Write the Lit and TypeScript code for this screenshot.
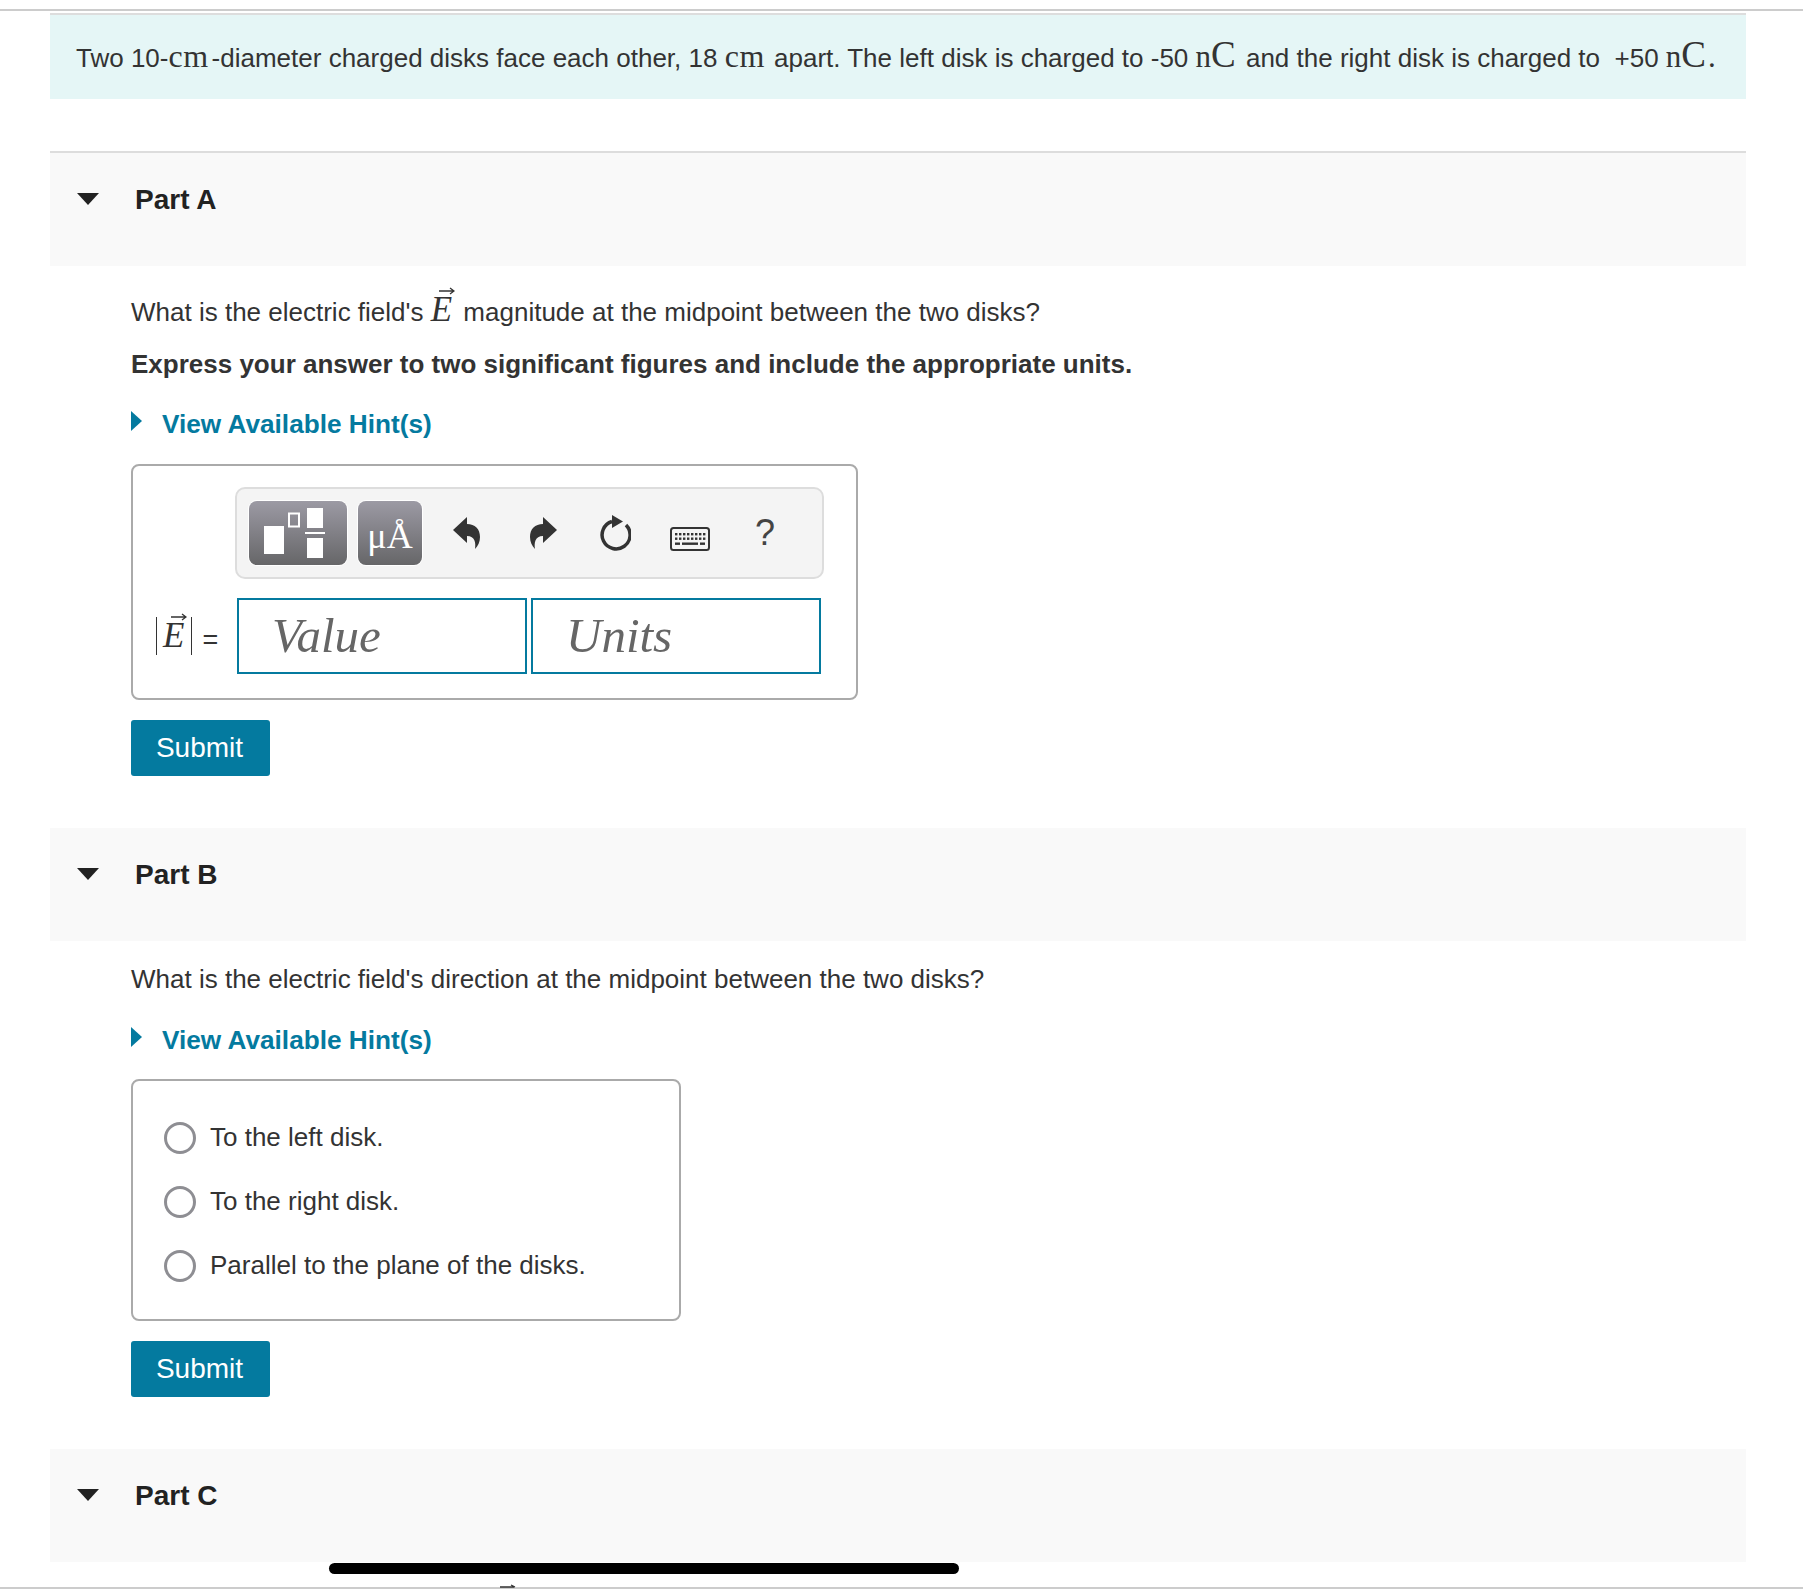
import { LitElement, html, css, svg } from "lit";
import { customElement } from "lit/decorators.js";

@customElement("app-root")
export class AppRoot extends LitElement {
  static styles = css`
    :host { display: block; position: relative; width: 1803px; height: 1589px; overflow: hidden; background: #fff;
      font-family: "Liberation Sans", Arial, sans-serif; font-size: 26px; line-height: 30px; color: #333; }
    .rule { height: 2px; background: #ccc; }
    .top { margin-top: 9px; }
    .bottom { margin-top: 25px; }
    .content { margin: 2px 57px 0 50px; }
    .banner { box-sizing: border-box; height: 86px; border-top: 2px solid #ddd; background: #e5f6f6; padding: 25px 0 0 26px; white-space: pre; }
    .m { font-family: "Liberation Serif", "Times New Roman", serif; font-size: 31px; }
    .cm { font-size: 32px; letter-spacing: 0.500px; }
    .gap { margin-left: 3px; }
    .gap2 { margin-left: 2px; }
    .big { font-size: 37px; }
    .dot { margin-left: 2px; }
    .head { display: flex; height: 113px; background: #f9f9f9; box-sizing: border-box; padding: 32px 0 0 27px; font-weight: 700; font-size: 28px; color: #222; }
    .head.first { height: 115px; border-top: 2px solid #ddd; }
    .caret { width: 22px; height: 28px; margin-right: 36px; display: flex; align-items: center; }
    .part { margin-top: 52px; }
    .body { padding-left: 81px; }
    p { margin: 0; white-space: pre; }
    .q { margin-top: 29px; height: 32px; }
    .q.plain { margin-top: 23px; height: 30px; }
    .ask { margin-top: 22px; font-weight: 700; }
    .hint { margin-top: 30px; display: flex; align-items: center; color: #047a9f; font-weight: 700; font-size: 26.200px; }
    .hint svg { margin-right: 20px; position: relative; top: -3px; }
    .hint.b { margin-top: 31px; }
    .box { border: 2px solid #aaa; border-radius: 8px; box-sizing: border-box; background: #fff; }
    .answer { width: 727px; height: 236px; margin-top: 25px; padding: 21px 0 0 22px; }
    .tools { margin-left: 80px; width: 589px; height: 92px; box-sizing: border-box; border: 2px solid #ddd; border-radius: 10px; background: #f4f4f4; padding: 12px; display: flex; align-items: center; }
    .tb { height: 64px; box-sizing: border-box; box-shadow: 0 0 0 1px #fff; border-radius: 8px; background: linear-gradient(#9c9aa4, #666668); color: #fff; display: flex; align-items: center; justify-content: center; }
    .tb.tpl { width: 98px; padding-right: 6px; }
    .tb.unit { width: 64px; margin-left: 11px; font-family: "Liberation Serif", serif; font-size: 36px; padding-top: 6px; }
    .undo { margin-left: 31px; }
    .redo { margin-left: 50px; }
    .reload { margin-left: 42px; }
    .kbd { margin-left: 39px; margin-top: 12px; }
    .help { margin-left: 45px; font-size: 36px; color: #444; }
    .row { display: flex; margin-top: 19px; align-items: center; }
    .label { width: 82px; display: flex; align-items: center; }
    .eq { margin: 8px 0 0 10px; font-size: 27px; }
    .field { width: 290px; height: 76px; box-sizing: border-box; border: 2px solid #047a9f; display: flex; align-items: center; padding-left: 33px; font-family: "Liberation Serif", serif; font-style: italic; font-size: 49px; color: #666; }
    .field + .field { margin-left: 4px; }
    .e { position: relative; display: inline-block; font-family: "Liberation Serif", serif; font-style: italic; font-size: 35px; line-height: 30px; margin: 0 4px 0 0; }
    .e svg { position: absolute; left: 8px; top: -8px; }
    .e.tight { margin: 0 6px; }
    .bar { display: inline-block; width: 1px; height: 38px; background: #333; margin-left: 1px; }
    .submit { display: flex; width: 139px; height: 56px; margin-top: 20px; padding-right: 2px; box-sizing: border-box; align-items: center; justify-content: center; background: #047a9f; border-radius: 3px; color: #fff; font-size: 28px; }
    .choices { width: 550px; height: 242px; margin-top: 24px; padding: 41px 0 0 31px; display: flex; flex-direction: column; gap: 32px; }
    .choice { display: flex; align-items: center; height: 32px; gap: 14px; }
    .choice span:last-child { padding-bottom: 2px; }
    .radio { width: 32px; height: 32px; box-sizing: border-box; border: 3px solid #8e8e93; border-radius: 50%; }
    .home { position: absolute; left: 329px; top: 1563px; width: 630px; height: 11px; border-radius: 6px; background: #000; }
    .tail { position: absolute; left: 500px; top: 1584px; }
  `;

  private caret() {
    return html`<span class="caret"><svg width="22" height="12" viewBox="0 0 22 12"><path d="M0 0H22L11 12Z" fill="#222"/></svg></span>`;
  }

  private hint(cls = "") {
    return html`<div class="hint ${cls}"><svg width="11" height="20" viewBox="0 0 11 20"><path d="M0 0L11 10L0 20Z" fill="#047a9f"/></svg>View Available Hint(s)</div>`;
  }

  private vec(cls = "") {
    return html`<span class="e ${cls}">E<svg width="16" height="8" viewBox="0 0 16 8"><path d="M0 4H14M11 1L15 4L11 7" fill="none" stroke="#333" stroke-width="1.300"/></svg></span>`;
  }

  private keyboard() {
    const keys = [];
    for (let i = 0; i < 8; i++) keys.push(svg`<rect x="${5 + i * 4}" y="6" width="2.400" height="2.400"/>`);
    for (let i = 0; i < 8; i++) keys.push(svg`<rect x="${5 + i * 4}" y="10.500" width="2.400" height="2.400"/>`);
    return html`<svg class="kbd" width="40" height="24" viewBox="0 0 40 24">
      <rect x="1" y="1" width="38" height="22" rx="2.500" fill="none" stroke="#333" stroke-width="2"/>
      <g fill="#333">${keys}<rect x="5" y="15.500" width="5" height="2.400"/><rect x="12" y="15.500" width="16" height="2.400"/><rect x="30" y="15.500" width="5" height="2.400"/></g>
    </svg>`;
  }

  render() {
    const arrow = "M0 13L14 0V7C22 7 27 12 27 20C27 25 25 29 22 32C23 26 22 19 14 19V26Z";
    return html`
      <div class="rule top"></div>
      <div class="content">
        <div class="banner">Two 10-<span class="m cm">cm</span><span class="gap">-diameter charged disks face each other, 18 </span><span class="m cm">cm</span> <span class="gap2">apart. The left disk is charged to -50 </span><span class="m">n<span class="big">C</span></span> <span class="gap">and the right disk is charged to  +50 </span><span class="m">n<span class="big">C</span><span class="dot">.</span></span></div>

        <section class="part">
          <div class="head first">${this.caret()}Part A</div>
          <div class="body">
            <p class="q">What is the electric field's ${this.vec()} magnitude at the midpoint between the two disks?</p>
            <p class="ask">Express your answer to two significant figures and include the appropriate units.</p>
            ${this.hint()}
            <div class="box answer">
              <div class="tools">
                <div class="tb tpl"><svg width="62" height="52" viewBox="0 0 62 52">
                  <rect x="0" y="19" width="20" height="28" fill="#fff"/>
                  <rect x="25" y="6.500" width="10" height="13" fill="none" stroke="#fff" stroke-width="2"/>
                  <rect x="43" y="1" width="16" height="20" fill="#fff"/>
                  <rect x="41" y="25" width="20" height="2" fill="#fff"/>
                  <rect x="43" y="31" width="16" height="20" fill="#fff"/>
                </svg></div>
                <div class="tb unit">μÅ</div>
                <svg class="undo" width="27" height="32" viewBox="0 0 27 32"><path d="${arrow}" fill="#333"/></svg>
                <svg class="redo" width="27" height="32" viewBox="0 0 27 32"><path d="${arrow}" fill="#333" transform="matrix(-1 0 0 1 27 0)"/></svg>
                <svg class="reload" width="32" height="37" viewBox="0 0 32 37">
                  <path d="M13 6.500A14 14 0 1 0 27 10" fill="none" stroke="#333" stroke-width="3.500"/>
                  <path d="M13 0L24 6.500L13 13Z" fill="#333"/>
                </svg>
                ${this.keyboard()}
                <span class="help">?</span>
              </div>
              <div class="row">
                <div class="label"><span class="bar"></span>${this.vec("tight")}<span class="bar"></span><span class="eq">=</span></div>
                <div class="field">Value</div>
                <div class="field">Units</div>
              </div>
            </div>
            <div class="submit">Submit</div>
          </div>
        </section>

        <section class="part">
          <div class="head">${this.caret()}Part B</div>
          <div class="body">
            <p class="q plain">What is the electric field's direction at the midpoint between the two disks?</p>
            ${this.hint("b")}
            <div class="box choices">
              <div class="choice"><span class="radio"></span><span>To the left disk.</span></div>
              <div class="choice"><span class="radio"></span><span>To the right disk.</span></div>
              <div class="choice"><span class="radio"></span><span>Parallel to the plane of the disks.</span></div>
            </div>
            <div class="submit">Submit</div>
          </div>
        </section>

        <section class="part">
          <div class="head">${this.caret()}Part C</div>
        </section>
      </div>
      <div class="rule bottom"></div>
      <div class="home"></div>
      <svg class="tail" width="16" height="4" viewBox="0 0 16 4"><path d="M0 3H14M11 1L15 3" fill="none" stroke="#333" stroke-width="1.300"/></svg>
    `;
  }
}
